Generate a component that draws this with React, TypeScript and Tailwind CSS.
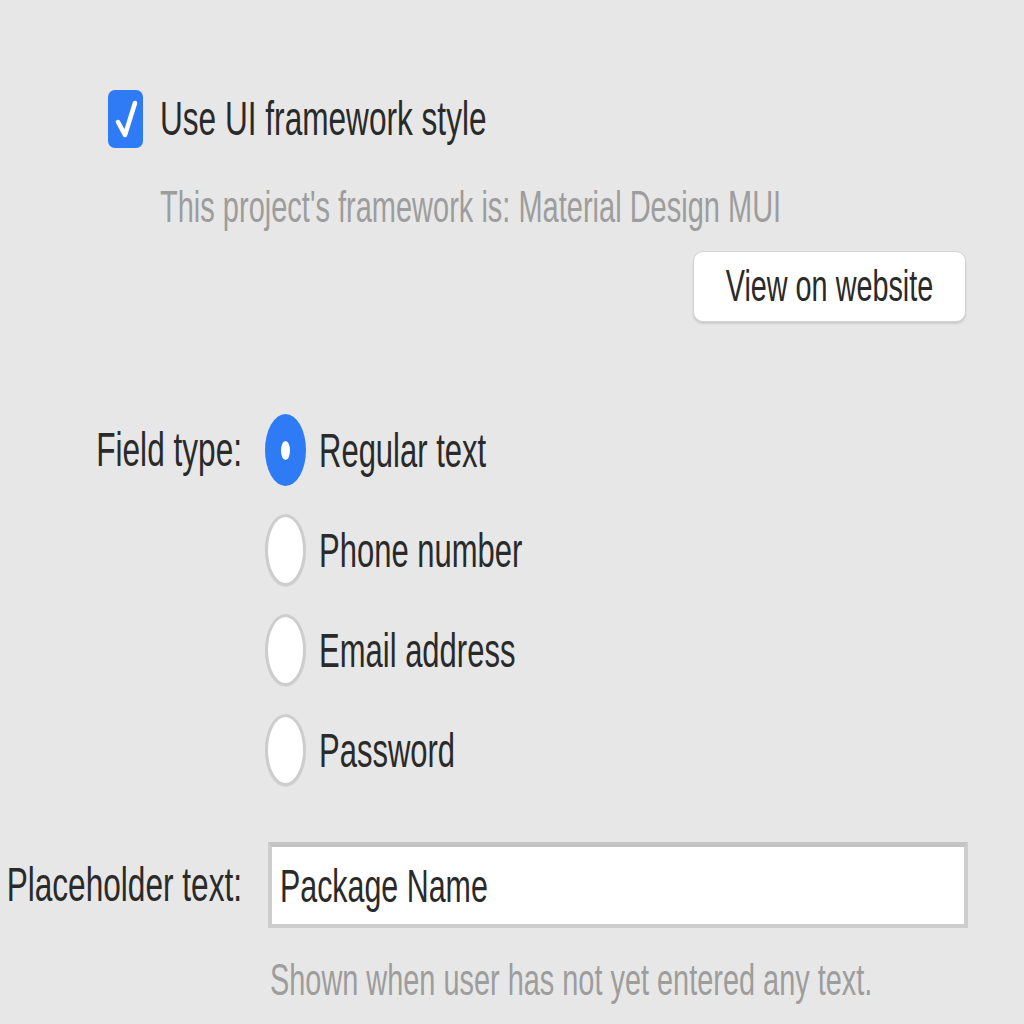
import React from "react";

type RadioProps = {
    label: string;
    checked?: boolean;
};

function Radio({ label, checked }: RadioProps) {
    return (
        <div className="flex h-[72px] items-center gap-[13px]">
            {checked ? (
                <div className="flex h-[72px] w-[41px] items-center justify-center rounded-[50%] bg-[#2f7bf5]">
                    <div className="h-[19px] w-[9px] rounded-[50%] bg-white" />
                </div>
            ) : (
                <div className="h-[72px] w-[41px] rounded-[50%] border-[3px] border-[#cdcdcd] bg-white shadow-[0_1px_1px_rgba(0,0,0,0.08)]" />
            )}
            <span className="inline-block scale-y-[1.55] text-[31px] leading-none text-[#2a2a2a]">
                {label}
            </span>
        </div>
    );
}

export default function App() {
    const fieldTypes = ["Regular text", "Phone number", "Email address", "Password"];

    return (
        <div
            className="h-[1024px] w-[1024px] overflow-hidden bg-[#e7e7e7]"
            style={{ fontFamily: '"Liberation Sans", Arial, sans-serif' }}
        >
            {/* framework section */}
            <div className="flex flex-col pl-[108px] pr-[58px] pt-[90px]">
                <div className="flex h-[58px] items-center gap-[17px]">
                    <div className="h-[58px] w-[35px] rounded-[7px] bg-[#2f7bf5]">
                        <svg viewBox="0 0 35 58" preserveAspectRatio="none" className="h-full w-full">
                            <path d="M10 32 L17 45 L27 13" fill="none" stroke="white" strokeWidth="4.5" strokeLinecap="round" strokeLinejoin="round" />
                        </svg>
                    </div>
                    <span className="inline-block scale-y-[1.55] text-[31.6px] leading-none text-[#2a2a2a]">
                        Use UI framework style
                    </span>
                </div>
                <div className="ml-[52px] mt-[39px] flex h-[40px] items-center">
                    <span className="inline-block scale-y-[1.55] text-[29px] leading-none text-[#9d9d9d]">
                        This project's framework is: Material Design MUI
                    </span>
                </div>
                <button className="mt-[24px] flex h-[71px] w-[273px] items-center justify-center self-end rounded-[10px] border border-[#d2d2d2] bg-white shadow-[0_2px_2px_rgba(0,0,0,0.12)]">
                    <span className="inline-block scale-y-[1.55] text-[28.8px] leading-none text-[#2a2a2a]">
                        View on website
                    </span>
                </button>
            </div>

            {/* field type */}
            <div className="mt-[92px] flex">
                <div className="flex h-[72px] w-[242px] items-center justify-end">
                    <span className="inline-block scale-y-[1.55] text-[31.6px] leading-none text-[#2a2a2a]">
                        Field type:
                    </span>
                </div>
                <div className="ml-[23px] flex flex-col gap-[28px]">
                    {fieldTypes.map((t, i) => (
                        <Radio key={t} label={t} checked={i === 0} />
                    ))}
                </div>
            </div>

            {/* placeholder */}
            <div className="mt-[56px] flex items-center">
                <div className="flex w-[242px] justify-end">
                    <span className="inline-block scale-y-[1.55] text-[31.6px] leading-none text-[#2a2a2a]">
                        Placeholder text:
                    </span>
                </div>
                <div className="ml-[26px] flex h-[86px] w-[700px] items-center border-[4px] border-t-[5px] border-[#cdcdcd] border-t-[#c4c4c4] bg-white pl-[8px]">
                    <span className="inline-block scale-y-[1.55] text-[30.4px] leading-none text-[#2a2a2a]">
                        Package Name
                    </span>
                </div>
            </div>
            <div className="ml-[270px] mt-[32px] flex h-[40px] items-center">
                <span className="inline-block scale-y-[1.55] text-[28.9px] leading-none text-[#9d9d9d]">
                    Shown when user has not yet entered any text.
                </span>
            </div>
        </div>
    );
}
